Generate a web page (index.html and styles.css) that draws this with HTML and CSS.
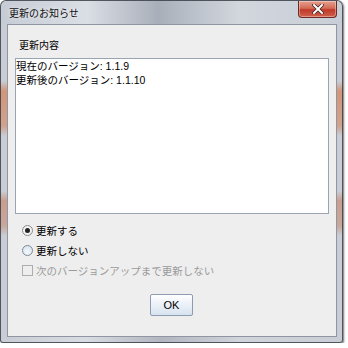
FILE: index.html
```html
<!DOCTYPE html>
<html lang="ja">
<head>
<meta charset="utf-8">
<link rel="stylesheet" href="styles.css">
</head>
<body>
<div class="window">
  <div class="titlebar">
    <span class="title">更新のお知らせ</span>
    <div class="close">
      <svg width="12" height="10" viewBox="0 0 12 10"><path d="M2 1 L10 9 M10 1 L2 9" stroke="#3a2020" stroke-width="3.4" stroke-linecap="square"/><path d="M2 1 L10 9 M10 1 L2 9" stroke="#ffffff" stroke-width="2" stroke-linecap="square"/></svg>
    </div>
  </div>
  <div class="content">
    <div class="label">更新内容</div>
    <div class="textarea">
      <div class="line">現在のバージョン: 1.1.9</div>
      <div class="line">更新後のバージョン: 1.1.10</div>
    </div>
    <div class="options">
      <div class="row"><span class="radio checked"></span><span>更新する</span></div>
      <div class="row"><span class="radio"></span><span>更新しない</span></div>
      <div class="row disabled"><span class="check"></span><span>次のバージョンアップまで更新しない</span></div>
    </div>
    <div class="buttons"><button class="ok">OK</button></div>
  </div>
</div>
</body>
</html>
```
FILE: styles.css
```css
html, body {
  margin: 0;
  padding: 0;
  background: #ffffff;
}
body {
  font-family: "Liberation Sans", "Noto Sans CJK JP", sans-serif;
  font-size: 10.5px;
  color: #000;
}
.window {
  width: 343px;
  height: 343px;
  box-sizing: border-box;
  border: 1px solid rgba(50, 54, 62, 0.8);
  border-radius: 6px 6px 3px 3px;
  padding: 0 5px 5px 6px;
  display: flex;
  flex-direction: column;
  box-shadow: 1px 1px 2px rgba(0, 0, 0, 0.55);
  background:
    linear-gradient(to bottom, rgba(0,0,0,0) 0, rgba(0,0,0,0) 80px, rgba(214,120,70,0.65) 90px, rgba(214,120,70,0.5) 125px, rgba(0,0,0,0) 135px, rgba(0,0,0,0) 190px, rgba(200,110,70,0.5) 200px, rgba(200,110,70,0.4) 225px, rgba(0,0,0,0) 235px),
    linear-gradient(to right, #c8cdd5, #d8dce3 25%, #b1b6c0 47%, #d0d5dc 70%, #c9ced6);
}
.titlebar {
  height: 23px;
  display: flex;
  justify-content: space-between;
  align-items: flex-start;
  margin-left: -5px;
  margin-right: -4px;
  padding-left: 7px;
  padding-right: 4px;
  background: linear-gradient(to right, #c6ccd5, #dadee5 25%, #a9afba 46%, #d2d7de 70%, #c8ced7);
  border-radius: 5px 5px 0 0;
}
.title {
  font-family: "Noto Sans CJK JP", sans-serif;
  font-size: 10px;
  line-height: 24px;
  color: #111;
  text-shadow: 0 0 4px rgba(255,255,255,0.9);
}
.close {
  width: 39px;
  height: 17px;
  box-sizing: border-box;
  border: 1px solid #6e2a22;
  border-top: none;
  border-radius: 0 0 4px 4px;
  background: linear-gradient(to bottom, #e6a090 0%, #d46b55 45%, #c0392a 55%, #d0614c 100%);
  display: flex;
  align-items: center;
  justify-content: center;
  box-shadow: inset 0 0 0 1px rgba(255,255,255,0.35);
}
.close svg { display: block; }
.content {
  flex: 1;
  box-sizing: border-box;
  border: 1px solid #8f96a1;
  background: #eeeeee;
  display: flex;
  flex-direction: column;
}
.label {
  font-family: "Noto Sans CJK JP", sans-serif;
  font-size: 10px;
  margin-top: 12px;
  line-height: 16px;
  height: 16px;
  padding-left: 11px;
}
.textarea {
  margin-top: 5px;
  margin-left: 7px;
  width: 314px;
  height: 156px;
  box-sizing: border-box;
  border: 1px solid #9aa5b3;
  background: #ffffff;
  padding: 0;
}
.line {
  line-height: 14px;
  height: 14px;
  white-space: nowrap;
}
.options {
  margin-top: 6px;
  padding-left: 14px;
  display: flex;
  flex-direction: column;
}
.row {
  height: 20px;
  display: flex;
  align-items: center;
  gap: 3px;
}
.disabled { color: #9b9b9b; }
.radio {
  width: 11px;
  height: 11px;
  box-sizing: border-box;
  border-radius: 50%;
  border: 1px solid #7d8a99;
  background: radial-gradient(circle at 50% 70%, #f4f8fc 0, #d4e0ec 100%);
  display: flex;
  align-items: center;
  justify-content: center;
}
.radio.checked {
  border-color: #8a8a8a;
  background: #f3f3f3;
}
.radio.checked::after {
  content: "";
  width: 5px;
  height: 5px;
  border-radius: 50%;
  background: #222;
}
.check {
  width: 11px;
  height: 11px;
  box-sizing: border-box;
  border: 1px solid #adadad;
  background: #eeeeee;
}
.buttons {
  margin-top: 14px;
  display: flex;
  justify-content: center;
}
.ok {
  width: 43px;
  height: 22px;
  box-sizing: border-box;
  border: 1px solid #8d9cb0;
  border-radius: 2px;
  background: linear-gradient(to bottom, #ffffff 0%, #eef3f9 40%, #d7e3ef 100%);
  font-family: "Liberation Sans", sans-serif;
  font-size: 11px;
  color: #000;
  padding: 0;
  margin-left: -1px;
}
```
